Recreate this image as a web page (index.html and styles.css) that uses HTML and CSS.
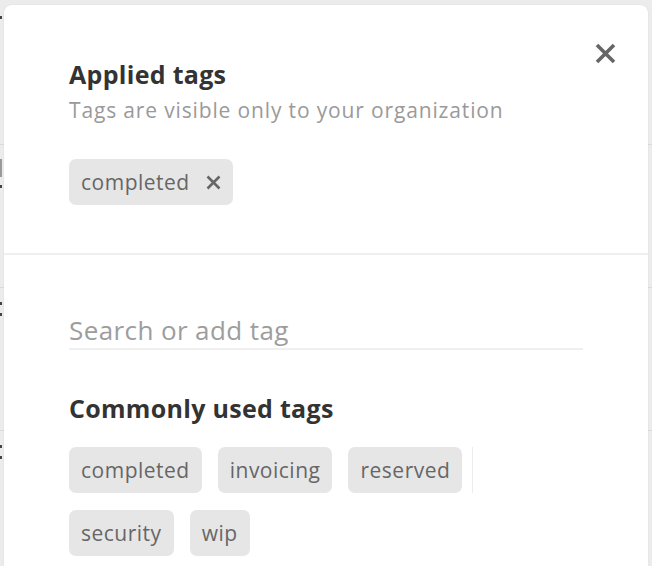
FILE: index.html
```html
<!DOCTYPE html>
<html>
<head>
<meta charset="utf-8">
<link rel="stylesheet" href="styles.css">
</head>
<body>
<div class="backdrop">
  <div class="bg-row"><span class="mark m1"></span></div>
  <div class="bg-row"><span class="mark m2"></span><span class="mark m1"></span></div>
  <div class="bg-row"><span class="mark m1"></span><span class="mark m1"></span></div>
  <div class="bg-row"><span class="mark m1"></span><span class="mark m1"></span></div>
</div>
<div class="panel">
  <section class="applied">
    <button class="close" aria-label="Close">
      <svg width="21" height="21" viewBox="0 0 21 21"><path d="M2 2L19 19M19 2L2 19" stroke="#666" stroke-width="3.6" stroke-linecap="butt"/></svg>
    </button>
    <h2 class="title">Applied tags</h2>
    <p class="sub">Tags are visible only to your organization</p>
    <div class="tags">
      <span class="tag">completed <svg class="x" width="15" height="15" viewBox="0 0 15 15"><path d="M1.5 1.5L13.5 13.5M13.5 1.5L1.5 13.5" stroke="#666" stroke-width="2.6"/></svg></span>
    </div>
  </section>
  <section class="common">
    <div class="search">Search or add tag</div>
    <h2 class="title">Commonly used tags</h2>
    <div class="tags wrap">
      <span class="tag">completed</span>
      <span class="tag">invoicing</span>
      <span class="tag">reserved</span>
      <span class="sep"></span>
      <span class="tag">security</span>
      <span class="tag">wip</span>
    </div>
  </section>
</div>
</body>
</html>
```
FILE: styles.css
```css
html, body {
  margin: 0;
  padding: 0;
}
body {
  width: 652px;
  height: 566px;
  overflow: hidden;
  background: #ececec;
  position: relative;
  font-family: "Open Sans", Lato, sans-serif;
}
.backdrop {
  display: flex;
  flex-direction: column;
  padding-top: 2px;
}
.bg-row {
  height: 143px;
  border-bottom: 1px solid #dcdcdc;
  display: flex;
  flex-direction: column;
  gap: 8px;
  padding-top: 14px;
  box-sizing: border-box;
}
.mark {
  display: block;
  width: 2px;
  height: 3px;
  background: #444;
}
.m2 { height: 18px; background: #999; }
.panel {
  position: absolute;
  left: 4px;
  top: 5px;
  width: 644px;
  height: 580px;
  background: #fff;
  border-radius: 8px 8px 0 0;
  box-shadow: 0 0 2px rgba(0,0,0,0.08);
}
.applied {
  position: relative;
  padding: 53px 65px 0;
  height: 250px;
  box-sizing: border-box;
  border-bottom: 2px solid #efefef;
}
.close {
  position: absolute;
  right: 32px;
  top: 38px;
  border: 0;
  background: none;
  padding: 0;
  width: 21px;
  height: 21px;
}
.close svg { display: block; }
.title {
  margin: 0;
  font-size: 25px;
  font-weight: 700;
  color: #333;
  line-height: 32px;
  letter-spacing: 0.3px;
}
.sub {
  margin: 7px 0 0;
  font-size: 21px;
  color: #9a9a9a;
  line-height: 26px;
  letter-spacing: 0.85px;
}
.tags {
  display: flex;
  gap: 16px;
  margin-top: 36px;
}
.tag {
  display: inline-flex;
  align-items: center;
  height: 46px;
  padding: 0 12px;
  background: #e6e6e6;
  border-radius: 7px;
  font-size: 21px;
  color: #666;
  letter-spacing: 0.5px;
  box-sizing: border-box;
}
.tag .x { margin-left: 16px; }
.common {
  padding: 59px 65px 0;
}
.search {
  width: 514px;
  font-size: 26px;
  color: #9d9d9d;
  line-height: 32px;
  letter-spacing: 0.4px;
  padding-bottom: 2px;
  border-bottom: 2px solid #efefef;
}
.common .title { margin-top: 42px; }
.wrap {
  flex-wrap: wrap;
  row-gap: 17px;
  margin-top: 23px;
  width: 514px;
}
.sep {
  width: 1px;
  height: 46px;
  background: #ececec;
  margin-left: -6px;
}
```
